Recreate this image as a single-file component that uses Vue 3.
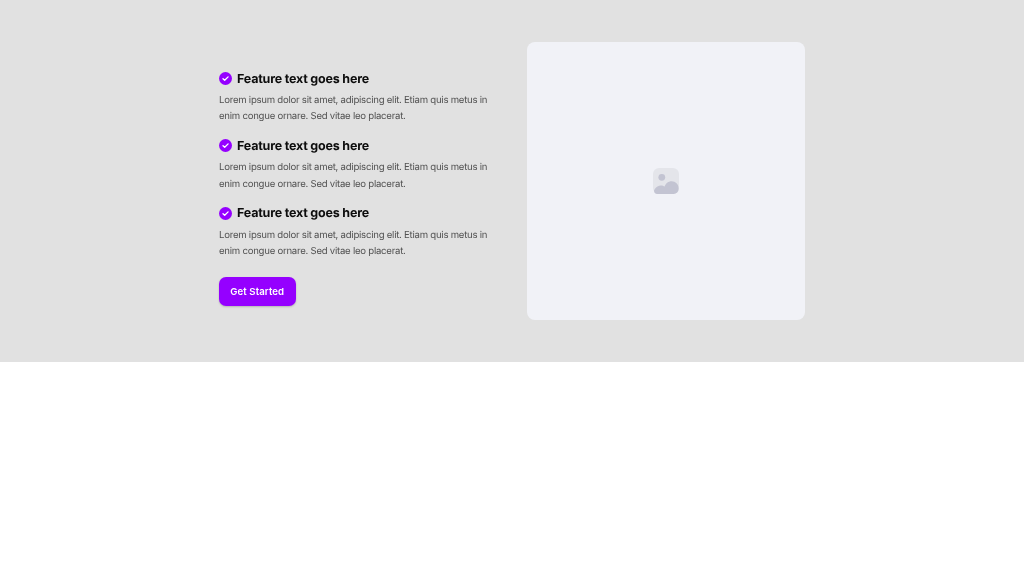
<script setup>
const features = [
  { id: 1, title: "Feature text goes here" },
  { id: 2, title: "Feature text goes here" },
  { id: 3, title: "Feature text goes here" },
]
const body = "Lorem ipsum dolor sit amet, adipiscing elit. Etiam quis metus in enim congue ornare. Sed vitae leo placerat."
</script>

<template>
  <section class="hero">
    <div class="inner">
      <div class="left">
        <ul class="features">
          <li v-for="f in features" :key="f.id" class="feature">
            <div class="head">
              <svg class="check" viewBox="0 0 13 13" width="13" height="13">
                <circle cx="6.5" cy="6.5" r="6.5" fill="#9500ff" />
                <path d="M4 6.7l1.7 1.6L9.1 4.9" fill="none" stroke="#fff" stroke-width="1.3" stroke-linecap="round" stroke-linejoin="round" />
              </svg>
              <h3>{{ f.title }}</h3>
            </div>
            <p>{{ body }}</p>
          </li>
        </ul>
        <button class="cta">Get Started</button>
      </div>
      <div class="media">
        <svg viewBox="0 0 26 26" width="26" height="26">
          <rect width="26" height="26" rx="6" fill="#e4e5ea" />
          <circle cx="8.8" cy="9.3" r="3.4" fill="#c3c4d2" />
          <path d="M4 26a3 3 0 0 1-2.2-5c1.6-2.4 3.6-3.6 6-3.6 1.6 0 2.8.5 3.8 1.2 1-3.2 3.6-5.4 7-5.4 3.9 0 7 3 7 7V21a5 5 0 0 1-5 5z" fill="#c3c4d2" />
        </svg>
      </div>
    </div>
  </section>
</template>

<style>
body {
  background: #fff;
}
</style>

<style scoped>
.hero {
  background: #e1e1e1;
  padding: 42px 0;
  font-family: Inter, "Liberation Sans", sans-serif;
  text-rendering: geometricPrecision;
  filter: blur(0.3px);
}

.inner {
  width: 586px;
  margin: 0 auto;
  display: grid;
  grid-template-columns: 278px 278px;
  gap: 30px;
  align-items: start;
}

.left {
  padding-top: 26.5px;
}

.features {
  list-style: none;
  margin: 0;
  padding: 0;
  display: flex;
  flex-direction: column;
  gap: 10.2px;
}

.head {
  display: flex;
  align-items: center;
  gap: 5px;
  margin-bottom: 4.3px;
}

.check {
  flex: none;
}

h3 {
  margin: 0;
  padding-top: 2px;
  font-size: 12.5px;
  line-height: 18px;
  font-weight: 700;
  letter-spacing: -0.2px;
  color: #0d0d0d;
}

p {
  margin: 0;
  max-width: 270px;
  font-size: 9.6px;
  letter-spacing: -0.25px;
  line-height: 16.5px;
  color: #525252;
}

.cta {
  display: block;
  margin-top: 16.5px;
  width: 76.5px;
  height: 28.5px;
  padding: 0;
  border: none;
  border-radius: 7px;
  background: #9500ff;
  color: #fff;
  font-family: inherit;
  font-size: 9.6px;
  font-weight: 600;
  letter-spacing: 0.1px;
  box-shadow: 0 1px 2px rgba(0, 0, 0, 0.2);
}

.media {
  height: 278.4px;
  border-radius: 8px;
  background: #f1f2f7;
  display: flex;
  align-items: center;
  justify-content: center;
}
</style>
